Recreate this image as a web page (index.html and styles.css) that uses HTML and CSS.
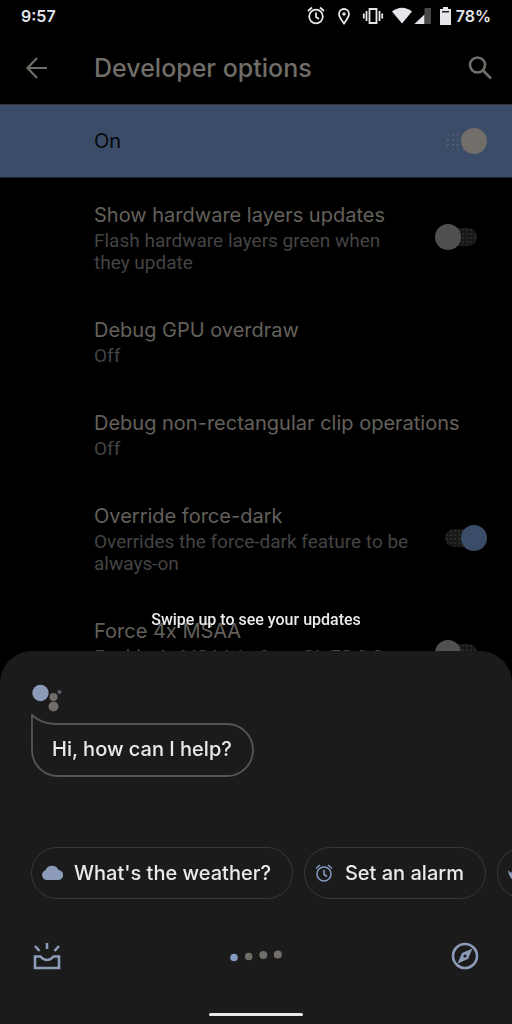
FILE: index.html
```html
<!DOCTYPE html>
<html lang="en">
<head>
<meta charset="utf-8">
<meta name="viewport" content="width=device-width, initial-scale=1">
<title>Developer options</title>
<link rel="stylesheet" href="styles.css">
</head>
<body>
<div class="status">
  <span class="status-time">9:57</span>
  <svg class="status-icons" width="140" height="20" viewBox="0 0 140 20" fill="none" stroke="#e4e6ea" stroke-width="1.8" aria-hidden="true">
    <circle cx="9" cy="10.5" r="6.8"/><path d="M9 6.5v4.500l3 2M1 5l4-3.500M17 5l-4-3.500"/>
    <path d="M37 17.500c-3-4-5-6.500-5-9.500a5 5 0 0 1 10 0c0 3-2 5.500-5 9.500z"/><circle cx="37" cy="8" r="1.700" fill="#e4e6ea" stroke="none"/>
    <path d="M62.500 3h7v14h-7zM59.500 5v10M72.500 5v10M56.800 7.500v5M75.200 7.500v5"/>
    <path d="M85 5.500q10-7.500 20 0L95 17.500z" fill="#e4e6ea" stroke="none"/>
    <path d="M124 2v16h-16.500z" fill="#484848" stroke="none"/><path d="M117.500 8.500V18h-10z" fill="#e4e6ea" stroke="none"/><path d="M117.500 2h6.500v16h-6.500V8.300z" fill="#484848" stroke="none"/>
  </svg>
  <svg width="11" height="18" viewBox="0 0 11 18" aria-hidden="true"><path d="M3 0h5v2h3v16H0V2h3z" fill="#e4e6ea"/><path d="M2 4h7v1.500H2z" fill="#222"/></svg>
  <span class="status-battery">78%</span>
</div>

<main class="settings">
  <header class="appbar">
    <button class="icon-button" aria-label="Back"><svg width="24" height="24" viewBox="0 0 24 24" fill="none" stroke="#716d68" stroke-width="2.200"><path d="M22 12H3M12 2L2.500 12 12 22"/></svg></button>
    <h1 class="appbar-title">Developer options</h1>
    <button class="icon-button" aria-label="Search"><svg width="24" height="24" viewBox="0 0 24 24" fill="none" stroke="#716d68" stroke-width="2.600"><circle cx="9.500" cy="9" r="7.500"/><path d="M15 14.500l8 8"/></svg></button>
  </header>
  <label class="banner"><span>On</span><input class="switch switch-banner" type="checkbox" role="switch" checked></label>
  <div class="list">
    <label class="row">
      <span class="row-text"><span class="row-title">Show hardware layers updates</span><span class="row-sub">Flash hardware layers green when they update</span></span>
      <input class="switch" type="checkbox" role="switch">
    </label>
    <div class="row"><span class="row-text"><span class="row-title">Debug GPU overdraw</span><span class="row-sub">Off</span></span></div>
    <div class="row"><span class="row-text"><span class="row-title">Debug non-rectangular clip operations</span><span class="row-sub">Off</span></span></div>
    <label class="row">
      <span class="row-text"><span class="row-title">Override force-dark</span><span class="row-sub">Overrides the force-dark feature to be always-on</span></span>
      <input class="switch" type="checkbox" role="switch" checked>
    </label>
    <label class="row">
      <span class="row-text"><span class="row-title">Force 4x MSAA</span><span class="row-sub">Enable 4x MSAA in OpenGL ES 2.0 applications</span></span>
      <input class="switch" type="checkbox" role="switch">
    </label>
  </div>
</main>

<div class="assistant">
  <p class="hint">Swipe up to see your updates</p>
  <section class="sheet" aria-label="Assistant">
    <svg class="logo" width="30" height="30" viewBox="0 0 30 30" aria-hidden="true"><circle cx="8.500" cy="9" r="8.200" fill="#8c9cb8"/><circle cx="21.500" cy="13" r="4" fill="#716d68"/><circle cx="21.500" cy="22.500" r="5" fill="#716d68"/><circle cx="27.500" cy="8" r="2" fill="#59606b"/></svg>
    <div class="bubble">
      <svg class="bubble-shape" width="224" height="64" viewBox="0 0 224 64" fill="none" stroke="#555" stroke-width="1.800" aria-hidden="true"><path d="M1 1v35.500A26 26 0 0 0 27 62H196A26 26 0 0 0 196 10H24Q10 9.500 1 1z"/></svg>
      <span class="bubble-text">Hi, how can I help?</span>
    </div>
    <div class="chips">
      <button class="chip"><svg width="22" height="22" viewBox="0 0 22 22" aria-hidden="true"><path d="M5.500 18A5 5 0 0 1 4.500 8.300a7 7 0 0 1 13-.3A5 5 0 0 1 17 18z" fill="#8c9cb8"/></svg>What's the weather?</button>
      <button class="chip"><svg width="20" height="20" viewBox="0 0 20 20" fill="none" stroke="#8299c2" stroke-width="1.600" aria-hidden="true"><circle cx="10" cy="11" r="7"/><path d="M10 7v4.500l3 2M2 5.500L6 2M18 5.500L14 2"/></svg>Set an alarm</button>
      <button class="chip" aria-label="More suggestions"><svg width="22" height="22" viewBox="0 0 22 22" aria-hidden="true"><path d="M1 8l3 3 4-7 9 9-8 7q-7-3-8-12z" fill="#8c9cb8"/></svg></button>
    </div>
    <nav class="tools" aria-label="Assistant tools">
      <button class="icon-button" aria-label="Updates"><svg width="28" height="28" viewBox="0 0 28 28" fill="none" stroke="#8c9cb8" stroke-width="2.600"><path d="M2 14.500h5.500q3 3.500 6.500 3.500t6.500-3.500H26V26H2zM14 1v6M2 4l4.500 5M26 4l-4.500 5"/></svg></button>
      <svg width="52" height="14" viewBox="0 0 52 14" fill="#716d68" aria-hidden="true"><circle cx="4" cy="8.500" r="3.800" fill="#8299bd"/><circle cx="18.700" cy="7.500" r="3.800"/><circle cx="33.300" cy="6" r="4"/><circle cx="47.800" cy="5.500" r="4"/></svg>
      <button class="icon-button" aria-label="Explore"><svg width="28" height="28" viewBox="0 0 28 28"><circle cx="14" cy="14" r="12" fill="none" stroke="#8c9cb8" stroke-width="2.600"/><path d="M21.500 6.500L17 17 6.500 21.500 11 11z" fill="#8c9cb8"/><circle cx="14" cy="14" r="1.600" fill="#1b1b1b"/></svg></button>
    </nav>
    <div class="home-bar"></div>
  </section>
</div>
</body>
</html>
```
FILE: styles.css
```css
* { box-sizing: border-box; }
body {
  margin: 0;
  height: 100vh;
  overflow: hidden;
  background: #000;
  color: #64615c;
  font-family: Inter, "Open Sans", sans-serif;
}
button {
  font: inherit;
  color: inherit;
  background: none;
  border: 0;
  padding: 0;
}
svg { display: block; flex: none; }

.status {
  display: flex;
  align-items: center;
  height: 32px;
  padding: 0 21px;
  color: #e4e6ea;
  font-size: 16px;
  font-weight: 600;
}
.status-time { flex: 1; }
.status-icons { margin-right: -7px; }
.status-battery { margin-left: 5px; }

.appbar {
  display: flex;
  align-items: center;
  height: 72px;
  padding: 0 20px 0 25px;
}
.icon-button { display: block; flex: none; }
.appbar-title {
  flex: 1;
  margin: 0;
  padding-left: 45px;
  color: #716d68;
  font-size: 25px;
  font-weight: 500;
}
.banner {
  display: flex;
  align-items: center;
  justify-content: space-between;
  height: 74px;
  padding: 0 25px 0 94px;
  background: #3b4c68;
  border-top: 1px solid #333;
  border-bottom: 1px solid #1d2532;
  color: #080808;
  font-size: 20px;
}
.list { padding-top: 2px; }
.row {
  display: flex;
  align-items: center;
  padding: 20px 25px 21px 94px;
}
.row-text { flex: 1; }
.row-title, .row-sub { display: block; }
.row-title {
  font-size: 20px;
  line-height: 30px;
  white-space: nowrap;
}
.row-sub {
  max-width: 320px;
  color: #444;
  font-family: Roboto, sans-serif;
  font-size: 19px;
  line-height: 22px;
}

.switch {
  appearance: none;
  flex: none;
  display: grid;
  align-items: center;
  width: 52px;
  height: 26px;
  margin: 0;
}
.switch::before, .switch::after {
  content: "";
  grid-area: 1 / 1;
}
.switch::before {
  justify-self: center;
  width: 32px;
  height: 18px;
  border-radius: 9px;
  background: radial-gradient(#282828 1px, #181818 1px) 0 0 / 4px 4px;
}
.switch::after {
  width: 26px;
  height: 26px;
  border-radius: 50%;
  background: #505050;
}
.switch:checked::after {
  justify-self: end;
  background: #3b4c68;
}
.switch-banner::before { background: radial-gradient(#56606f 1px, #3b4c68 1px) 0 0 / 5px 5px; }
.switch-banner:checked::after { background: #716d68; }

.assistant {
  position: fixed;
  inset: 0;
  display: flex;
  flex-direction: column;
  justify-content: flex-end;
  color: #e8eaed;
}
.hint {
  margin: 0 0 20px;
  font-family: Roboto, sans-serif;
  font-size: 16px;
  font-weight: 500;
  line-height: 22px;
  text-align: center;
}
.sheet {
  padding: 33px 0 8px;
  border-radius: 32px 32px 0 0;
  background: #1b1b1b;
}
.logo { margin-left: 32px; }
.bubble {
  display: grid;
  justify-content: start;
  margin-left: 31px;
}
.bubble-shape, .bubble-text { grid-area: 1 / 1; }
.bubble-text {
  padding: 19px 20px 0 21px;
  font-size: 20px;
  font-weight: 500;
  line-height: 32px;
}
.chips {
  display: flex;
  gap: 11px;
  margin-top: 69px;
  padding-left: 31px;
  overflow: hidden;
}
.chip {
  display: flex;
  align-items: center;
  flex: none;
  gap: 11px;
  height: 52px;
  padding: 0 21px 0 9px;
  border: 1px solid #383838;
  border-radius: 26px;
  font-size: 20px;
  font-weight: 500;
}
.tools {
  display: flex;
  align-items: center;
  justify-content: space-between;
  padding: 43px 33px 0;
}
.home-bar {
  width: 94px;
  height: 3px;
  margin: 43px auto 0;
  border-radius: 2px;
  background: #e8e8e8;
}
```
